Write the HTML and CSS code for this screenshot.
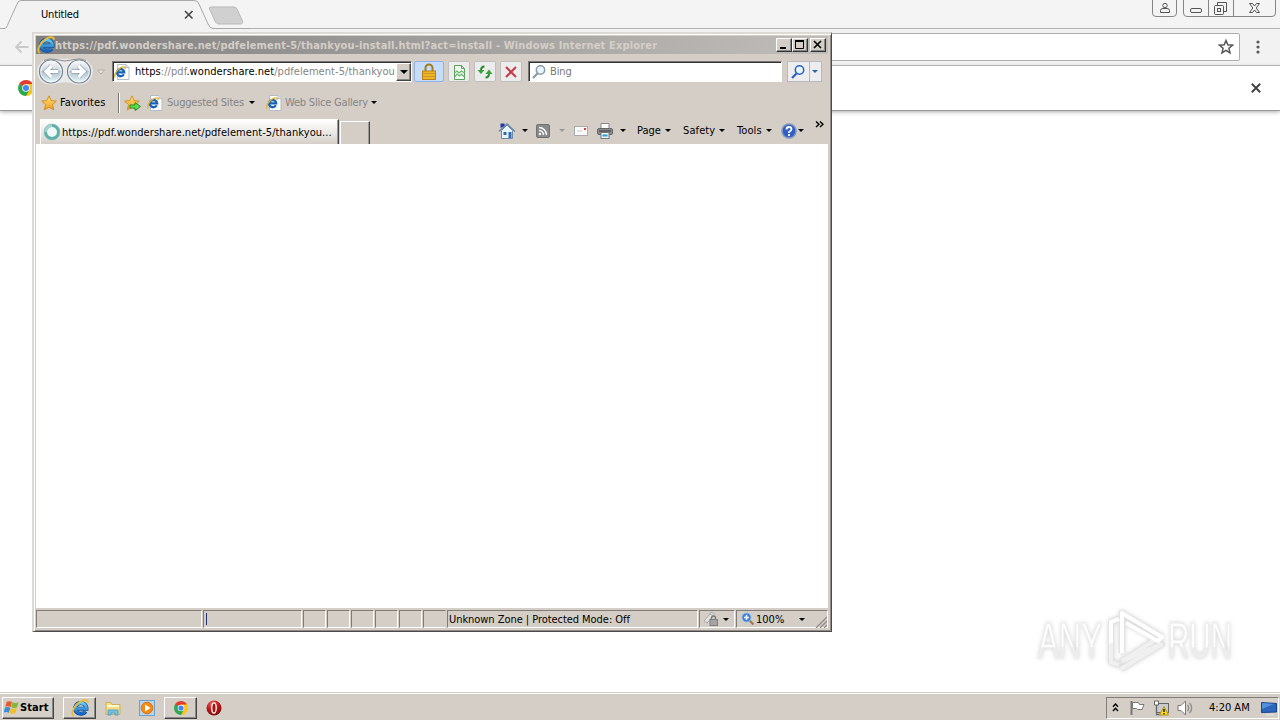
FILE: index.html
```html
<!DOCTYPE html>
<html lang="en">
<head>
<meta charset="utf-8">
<title>Desktop</title>
<link rel="stylesheet" href="styles.css">
</head>
<body>
<svg class="defs" aria-hidden="true">
  <defs>
    <linearGradient id="blue" x1="0" y1="0" x2="0" y2="1"><stop offset="0" stop-color="#62cdf8"/><stop offset="1" stop-color="#1763c0"/></linearGradient>
    <linearGradient id="gold" x1="0" y1="0" x2="0" y2="1"><stop offset="0" stop-color="#ffe680"/><stop offset="1" stop-color="#f09a12"/></linearGradient>
    <linearGradient id="glass" x1="0" y1="0" x2="0" y2="1"><stop offset="0" stop-color="#fdfdfe"/><stop offset=".48" stop-color="#ccd5dc"/><stop offset=".5" stop-color="#b3c1cc"/><stop offset="1" stop-color="#e6fbff"/></linearGradient>
    <linearGradient id="mark" x1="0" y1="0" x2="0" y2="1"><stop offset="0" stop-color="#ffffff"/><stop offset=".6" stop-color="#fdfdfd"/><stop offset=".62" stop-color="#ededed"/><stop offset="1" stop-color="#eeeeee"/></linearGradient>
    <radialGradient id="red" cx=".4" cy=".25" r=".8"><stop offset="0" stop-color="#f06a60"/><stop offset=".5" stop-color="#c01818"/><stop offset="1" stop-color="#700808"/></radialGradient>
  </defs>
  <symbol id="ie" viewBox="0 0 16 16">
    <path d="M12.900 11A5 4.800 0 1 1 13.700 8.600H5" fill="none" stroke="#0b4590" stroke-width="3.600"/>
    <path d="M12.900 11A5 4.800 0 1 1 13.700 8.600H5" fill="none" stroke="url(#blue)" stroke-width="2.600"/>
    <path d="M2.500 15C-.8 13.500 2.500 6 7.500 2.800C11.500 .3 15.500 .2 15 3.500" fill="none" stroke="#edbb30" stroke-width="1.600"/>
  </symbol>
  <symbol id="page" viewBox="0 0 16 16">
    <path d="M3.500 .5h8.500l3 3v12h-11.500z" fill="#fff" stroke="#b4bcc6"/><path d="M12 .5v3h3" fill="#dfe6ee" stroke="#b4bcc6"/>
    <path d="M9.800 10.300A3.600 3.600 0 1 1 10.200 8.400H4" fill="none" stroke="#1762b6" stroke-width="2.300"/>
    <path d="M1.200 13.500C-.5 11 3 5.500 6.500 3.800C9.500 2.200 12 2.600 11 5" fill="none" stroke="#e2b22f" stroke-width="1.400"/>
  </symbol>
  <symbol id="star" viewBox="0 0 16 16"><path d="M8 .8l2.200 4.800 5.200.5-3.900 3.500 1.200 5.300L8 12.200 3.300 14.900l1.200-5.300L.6 6.100l5.200-.5z" fill="url(#gold)" stroke="#d08a1c" stroke-width=".9"/></symbol>
  <symbol id="chrome" viewBox="0 0 16 16">
    <path d="M8 8L1.100 4A8 8 0 0 1 14.900 4z" fill="#e33b2e"/><path d="M8 8L14.900 4A8 8 0 0 1 8 16z" fill="#fbc616"/><path d="M8 8v8A8 8 0 0 1 1.100 4z" fill="#2da94f"/>
    <path d="M8 4h6.900L11.500 10 8 16z" fill="#fbc616"/><path d="M1.100 4l3.500 6L8 16l3.400-6z" fill="#2da94f"/><circle cx="8" cy="8" r="3.800" fill="#fff"/><circle cx="8" cy="8" r="3" fill="#4285f4"/>
  </symbol>
  <symbol id="lens" viewBox="0 0 16 16"><path d="M6.500 9.500L2 14" stroke="currentColor" stroke-width="2.200"/><circle cx="9.500" cy="6" r="4.200" fill="#e8f5fc" stroke="currentColor" stroke-width="1.500"/></symbol>
</svg>

<main class="desktop">
  <section class="chrome">
    <header class="chrome-tabs">
      <svg class="tab-shape" viewBox="0 0 250 30"><path d="M0 28.500H4C7 28.500 7 26 8 24L17 4Q18 .5 21 .5H194Q198 .5 199 4L208 24Q210 28.500 213 28.500H250V30H0z" fill="#f2f2f2"/><path d="M0 28.500H4C7 28.500 7 26 8 24L17 4Q18 .5 21 .5H194Q198 .5 199 4L208 24Q210 28.500 213 28.500H250" fill="none" stroke="#a9a9a9"/><path d="M211 7H234Q236 7 237 9L242.500 21Q243.500 24 240 24H219Q216.500 24 215.500 22L209.500 9Q208.500 7 211 7z" fill="#d0d0d0" stroke="#b9b9b9"/><path d="M185 11l7.500 7.500M192.500 11l-7.500 7.500" stroke="#444" stroke-width="1.600"/></svg>
      <span class="chrome-title t">Untitled</span>
      <svg class="winbtns" viewBox="0 0 130 18" fill="none" stroke="#858585"><path d="M2.500 0V13Q2.500 16.500 6 16.500H23Q26.500 16.500 26.500 13V0M33.500 0V13Q33.500 16.500 37 16.500H122Q125.500 16.500 125.500 13V0M58.500 0V16M83.500 0V16"/><g stroke="#555"><circle cx="15" cy="5.500" r="2.200"/><path d="M10.500 12.500V10.500Q10.500 8.500 13 8.500H17Q19.500 8.500 19.500 10.500V12.500z"/><rect x="40.500" y="8.500" width="11" height="4" rx="1.500"/><path d="M67.500 5V2.500H76.500V11.500H74"/><rect x="64.500" y="5.500" width="9" height="9" rx="1"/><rect x="67.500" y="8.500" width="3" height="3"/><path d="M99.500 3.500h3l2 2.500 2-2.500h3l-3.300 4.500 3.300 4.500h-3l-2-2.500-2 2.500h-3l3.300-4.500z"/></g></svg>
    </header>
    <div class="chrome-bar">
      <svg class="back" viewBox="0 0 16 14"><path d="M14.500 7H2M7.500 1.500L2 7l5.500 5.500" fill="none" stroke="#cacaca" stroke-width="1.800"/></svg>
      <div class="omnibox"><svg viewBox="0 0 16 16"><path d="M8 1.500l1.800 4.300 4.700.4-3.600 3.100 1.100 4.600-4-2.500-4 2.500 1.100-4.600L1.500 6.200l4.700-.4z" fill="none" stroke="#555" stroke-width="1.500"/></svg></div>
      <svg class="dots" viewBox="0 0 4 14" fill="#5a5a5a"><circle cx="2" cy="2" r="1.600"/><circle cx="2" cy="7" r="1.600"/><circle cx="2" cy="12" r="1.600"/></svg>
    </div>
    <div class="infobar"><svg class="i16"><use href="#chrome"/></svg><svg class="close" viewBox="0 0 10 10"><path d="M.8.8l8.400 8.400M9.200.8L.8 9.200" stroke="#444" stroke-width="2"/></svg></div>
  </section>

  <svg class="watermark" viewBox="0 0 210 76">
    <g fill="url(#mark)" stroke="#ececec" stroke-width=".8" font-family="Liberation Sans Narrow, Liberation Sans, sans-serif" font-size="50"><text x="8" y="55" textLength="64" lengthAdjust="spacingAndGlyphs">ANY</text><text x="138" y="55" textLength="64" lengthAdjust="spacingAndGlyphs">RUN</text></g>
    <g fill="none" stroke="#e4e4e4" stroke-width="6" stroke-linejoin="round"><path d="M89 16L81 19V59L89 62M92 50V10L132 34M91 66L132 41L92 58L125 37"/></g>
    <path d="M89 16L81 19V59L89 62M91 66L132 41L92 58L125 37" fill="none" stroke="#f0f0f0" stroke-width="4"/>
    <path d="M81 40V19L89 16M92 50V10L132 34L128 38L96 20" fill="none" stroke="#fff" stroke-width="4" stroke-linejoin="round"/>
  </svg>

  <section class="ie">
    <header class="titlebar">
      <svg class="i18"><use href="#ie"/></svg><b class="t title-text">https://pdf.wondershare.net/pdfelement-5/thankyou-install.html?act=install - Windows Internet Explorer</b>
      <div class="controls"><span class="cap"><svg viewBox="0 0 12 10"><path d="M2 8h6" stroke="#000" stroke-width="2"/></svg></span><span class="cap"><svg viewBox="0 0 12 10"><path d="M1.500 1v7.500h8V1M1 1h9" fill="none" stroke="#000"/><path d="M1 1h9" stroke="#000" stroke-width="2"/></svg></span><span class="cap last"><svg viewBox="0 0 12 10"><path d="M2 1l7 7M9 1L2 8" stroke="#000" stroke-width="1.600"/></svg></span></div>
    </header>

    <div class="nav">
      <svg class="travel" viewBox="0 0 68 28"><path d="M14 .8H44A12.800 12.800 0 0 1 44 26.500H40Q29 22 18 26.500H14A12.800 12.800 0 0 1 14 .8z" fill="#e9e9ea"/><path d="M8 2.500Q14 -.2 20 1.500Q29 4.500 38 1.500Q44 -.2 50 2.500" fill="none" stroke="#8e8c8a"/><g fill="url(#glass)" stroke="#74828f" stroke-width="1.200"><circle cx="15" cy="13.500" r="11.500"/><circle cx="43" cy="13.500" r="11.500"/></g><g fill="none" stroke="#f2f8fb" stroke-width="1"><circle cx="15" cy="13.500" r="10.300"/><circle cx="43" cy="13.500" r="10.300"/></g><g fill="none" stroke="#91a5b4" stroke-width="4.600"><path d="M22 13.500H11M15.500 8L10 13.500L15.500 19M36 13.500H47M42.500 8L48 13.500L42.500 19"/></g><g fill="none" stroke="#fff" stroke-width="3.200"><path d="M22 13.500H11M15.500 8L10 13.500L15.500 19M36 13.500H47M42.500 8L48 13.500L42.500 19"/></g><path d="M61.500 12h7l-3.500 4z" fill="#e6e2dc" stroke="#aaa49b" stroke-width=".8"/></svg>
      <div class="address"><svg class="i16"><use href="#page"/></svg><span class="t url"><i>https</i>://pdf<i>.wondershare.net</i>/pdfelement-5/thankyou-</span><span class="drop"><i class="caret big"></i></span></div>
      <span class="tool lock"><svg viewBox="0 0 16 18"><path d="M4.500 9V5a3.500 3.500 0 0 1 7 0v4" fill="none" stroke="#a77a18" stroke-width="2"/><rect x="1.500" y="8" width="13" height="8.500" fill="#efb52a" stroke="#b88216"/><path d="M2 10.500h12M2 13.500h12" stroke="#ce9520"/></svg></span>
      <span class="tool"><svg viewBox="0 0 16 18"><path d="M3.500 2.500h7l3 3v11h-10z" fill="#f3fbf3" stroke="#58a15a"/><path d="M10.500 2.500v3h3" fill="none" stroke="#58a15a"/><path d="M3.500 10l2.500-2 2 2 2.500-2 3 2M3.500 14l2.500-3 2.500 2 2-2 3 3" fill="none" stroke="#6db371" stroke-width="1.200"/></svg></span>
      <span class="tool"><svg viewBox="0 0 16 18"><path d="M7.500 3.500Q4 3.500 4 7.500" fill="none" stroke="#268b31" stroke-width="2"/><path d="M.5 7h7L4 11z" fill="#36a33c"/><path d="M8.500 14.500Q12 14.500 12 10.500" fill="none" stroke="#268b31" stroke-width="2"/><path d="M8.500 11h7L12 6.500z" fill="#36a33c"/></svg></span>
      <span class="tool"><svg viewBox="0 0 16 18"><path d="M3 4l10 10M13 4L3 14" stroke="#c53a44" stroke-width="2"/></svg></span>
      <div class="search"><svg class="i16"><use href="#lens"/></svg><span class="t bing">Bing</span></div>
      <span class="go"><svg class="i16"><use href="#lens"/></svg><i class="caret"></i></span>
    </div>

    <div class="favs">
      <svg class="i16"><use href="#star"/></svg><span class="t f1">Favorites</span><i class="rule"></i>
      <svg class="addstar" viewBox="0 0 18 16"><use href="#star" width="16" height="16"/><path d="M6 10h5V7.500l5.500 4-5.500 4V13H6z" fill="#5fdc50" stroke="#219126"/></svg>
      <svg class="i16 f2"><use href="#page"/></svg><span class="t muted f3">Suggested Sites</span><i class="caret f4"></i>
      <svg class="i16 f5"><use href="#page"/></svg><span class="t muted f6">Web Slice Gallery</span><i class="caret f7"></i>
    </div>

    <div class="tabs">
      <div class="tab"><svg class="i18" viewBox="0 0 18 18"><circle cx="9" cy="9" r="6.500" fill="#eef8f6" stroke="#5cb0ab" stroke-width="3"/><path d="M9 2.500A6.500 6.500 0 0 0 2.500 9" fill="none" stroke="#a3d3ce" stroke-width="3"/><circle cx="9" cy="9" r="8" fill="none" stroke="#8fb9b8" stroke-width=".6"/></svg><span class="t tab-text">https://pdf.wondershare.net/pdfelement-5/thankyou...</span></div>
      <div class="newtab"></div>
      <div class="commands">
        <svg class="home" viewBox="0 0 18 18"><path d="M3.500 8.500V16.500H14.500V8.500L9 3z" fill="#eaf4fc" stroke="#6b8ba8"/><path d="M1 9.500L9 2l8 7.500" fill="none" stroke="#668aa9" stroke-width="1.500"/><path d="M2.500 6V1.500h4V4z" fill="#2637a8"/><path d="M5.500 10h3v3h-3zM10.500 10h3v6h-3z" fill="#2f6cad"/></svg><i class="caret c1"></i>
        <svg class="rss" viewBox="0 0 14 14"><rect x=".5" y=".5" width="13" height="13" rx="1.500" fill="#898989" stroke="#717171"/><circle cx="4" cy="10" r="1.200" fill="#fff"/><path d="M3 6.500A4.500 4.500 0 0 1 7.500 11M3 3.500A7.500 7.500 0 0 1 10.500 11" fill="none" stroke="#fff" stroke-width="1.400"/></svg><i class="caret grey c2"></i>
        <svg class="mail" viewBox="0 0 14 12"><rect x=".5" y="1.500" width="13" height="9" fill="#fafafa" stroke="#aaa"/><path d="M10 3h2v2h-2z" fill="#e33"/><path d="M3 6h5" stroke="#ccc"/></svg>
        <svg class="printer" viewBox="0 0 16 16"><path d="M4 6V.5h8V6" fill="#fff" stroke="#888"/><rect x=".5" y="5.500" width="15" height="6" rx="1.500" fill="#8c8c8c" stroke="#666"/><path d="M2 8h12" stroke="#333"/><rect x="4" y="9.500" width="8" height="6" fill="#e9f6fb" stroke="#777"/><path d="M5.500 12.500h5" stroke="#2b9cc8" stroke-width="2"/></svg><i class="caret c3"></i>
        <span class="t pg">Page</span><i class="caret c4"></i><span class="t sf">Safety</span><i class="caret c5"></i><span class="t tl">Tools</span><i class="caret c6"></i>
        <svg class="help" viewBox="0 0 16 16"><circle cx="8" cy="8" r="7" fill="#315fc4" stroke="#8096bd" stroke-width="1.500"/><path d="M5.500 6.500Q5.500 4 8 4T10.500 6.200Q10.500 7.500 8 9v1M8 11v2" fill="none" stroke="#fff" stroke-width="1.800"/></svg><i class="caret c7"></i>
        <svg class="more" viewBox="0 0 9 7"><path d="M1 .5l3 2.800-3 2.800M5 .5l3 2.800-3 2.800" fill="none" stroke="#000" stroke-width="1.400"/></svg>
      </div>
    </div>

    <div class="content"></div>

    <footer class="status">
      <span class="pane s1"></span><span class="pane s2"><i></i></span><span class="pane s3"></span><span class="pane s3"></span><span class="pane s3"></span><span class="pane s3"></span><span class="pane s3"></span><span class="pane s3 open"></span>
      <span class="pane s4"><span class="t zone">Unknown Zone | Protected Mode: Off</span></span>
      <span class="pane s5"><svg viewBox="0 0 16 16"><path d="M1 10L7 3l3 2-6 7zM7 3l1-2 4 2" fill="#e4e4e4" stroke="#aaa"/><path d="M8.500 9V7a2 2 0 0 1 4 0v2" fill="none" stroke="#777" stroke-width="1.300"/><rect x="7" y="8.500" width="7.500" height="6" fill="#a5a5a5" stroke="#808080"/></svg><i class="caret"></i></span>
      <span class="pane s6"><svg viewBox="0 0 14 14"><path d="M8.500 8.500l4 4" stroke="#99774f" stroke-width="2.200"/><circle cx="5.500" cy="5.500" r="4.500" fill="#3b82d6" stroke="#8cbcf0"/><path d="M3 5.500h5M5.500 3v5" stroke="#fff" stroke-width="1.400"/></svg><span class="t zoom">100%</span><i class="caret"></i><svg class="grip" viewBox="0 0 12 12"><path d="M1 12L12 1M5 12l7-7M9 12l3-3" stroke="#8f8a83" stroke-width="1.300"/></svg></span>
    </footer>
  </section>

  <nav class="taskbar">
    <span class="btn start"><svg viewBox="0 0 18 18"><path d="M4 3Q6.500 1.500 9.500 3L8 8.500Q5 7 2.500 8.200z" fill="#e9592b"/><path d="M10 3.500Q13 5 16.500 3.500L15 8.800Q12 10 8.700 8.800z" fill="#82b83c"/><path d="M2.200 9Q5 8 7.800 9.300L6.200 14.500Q3.500 13 .7 14.200z" fill="#3a8ddd"/><path d="M8.300 9.500Q11 11 14.700 9.500L13.200 14.800Q10 16 6.800 14.800z" fill="#f3bd28"/></svg><b class="t">Start</b></span>
    <span class="btn app"><svg class="i18"><use href="#ie"/></svg></span>
    <svg class="task folder" viewBox="0 0 16 16"><path d="M1 2.500h5l1 2h8v10H1z" fill="#f4dc82" stroke="#c8b35f"/><path d="M2 6h12" stroke="#fff7c6" stroke-width="2"/><path d="M3 15V10h10v5h-3v-2H6v2z" fill="#75bfe5" stroke="#5aa0c8"/></svg>
    <svg class="task media" viewBox="0 0 16 16"><rect x=".5" y=".5" width="15" height="15" fill="#b7d5f0" stroke="#6b9fd2"/><circle cx="8" cy="8" r="5.800" fill="#f28a13" stroke="#d87710"/><path d="M6 4.500L11.500 8L6 11.500z" fill="#fff"/></svg>
    <span class="btn app second"><svg class="i14"><use href="#chrome"/></svg></span>
    <svg class="task opera" viewBox="0 0 16 16"><circle cx="8" cy="8" r="7.500" fill="url(#red)"/><ellipse cx="8" cy="8" rx="2.200" ry="5.200" fill="#a01313" stroke="#fff" stroke-width="1.300"/></svg>
    <div class="tray">
      <svg class="chev" viewBox="0 0 7 9"><path d="M1 3.800L3.500 1 6 3.800M1 8l2.500-2.800L6 8" fill="none" stroke="#000" stroke-width="1.400"/></svg>
      <svg class="flag" viewBox="0 0 16 16"><path d="M2.500 1v14" stroke="#777" stroke-width="2"/><path d="M3.500 2.500h6l1 2h4.500L13 9.500H8.500l-1-1h-4z" fill="#fff" stroke="#777"/></svg>
      <svg class="net" viewBox="0 0 16 16"><rect x="3.500" y="3.500" width="12" height="9" fill="#c9cbd0" stroke="#666"/><path d="M1.500 1v4h4V1z" fill="#fff" stroke="#666"/><path d="M3.500 5v9.500H8" fill="none" stroke="#666" stroke-width="1.300"/><path d="M11 6.500l4.500 8.500h-9z" fill="#ffdf24" stroke="#b49216"/><path d="M11 9v3M11 13v1.200" stroke="#000" stroke-width="1.300"/></svg>
      <svg class="sound" viewBox="0 0 17 16"><path d="M1 5.500h3L8.500 1v14L4 10.500H1z" fill="#fff" stroke="#777"/><path d="M10.500 5q2.500 3 0 6M12.500 3q4.500 5 0 10" fill="none" stroke="#888" stroke-width="1.200"/></svg>
      <span class="t clock">4:20 AM</span>
      <svg class="show" viewBox="0 0 16 16"><path d="M.5 2.500L15.500 3.500V12L.5 12.500z" fill="#2c66bb" stroke="#17438a"/><path d="M1 3l12 1L1 9z" fill="#5590dc"/><path d="M5 14.500h8" stroke="#ddd" stroke-width="1.500"/></svg>
    </div>
  </nav>
</main>
</body>
</html>
```
FILE: styles.css
```css
* { box-sizing: border-box; }
body { margin: 0; font: 11px "DejaVu Sans Condensed", "DejaVu Sans", sans-serif; color: #000; }
svg { display: block; flex: none; }
i { font-style: normal; }
.defs { position: absolute; width: 0; height: 0; }
.t { flex: none; white-space: nowrap; line-height: 14px; letter-spacing: -.2px; }
.i14 { width: 14px; height: 14px; }
.i16 { width: 16px; height: 16px; }
.i18 { width: 18px; height: 18px; }
.desktop { position: relative; width: 1280px; height: 720px; overflow: hidden; background: #fff; display: flex; flex-direction: column; justify-content: space-between; }

.chrome-tabs { height: 29px; display: flex; background: #f4f4f4; border-bottom: 1px solid #b3b3b3; }
.tab-shape { width: 250px; height: 30px; margin-right: -209px; }
.chrome-title { margin-top: 8px; z-index: 1; letter-spacing: -.15px; }
.winbtns { width: 130px; height: 18px; margin-left: auto; }
.chrome-bar { height: 37px; background: #f2f2f2; border-bottom: 1px solid #b5b5b5; display: flex; align-items: center; padding: 0 20px 0 14px; }
.back { width: 16px; height: 14px; }
.omnibox { flex: 1; height: 28px; margin: 0 16px 0 100px; border: 1px solid #adadad; border-radius: 2px; background: #fff; display: flex; align-items: center; justify-content: flex-end; padding-right: 5px; }
.omnibox svg { width: 16px; height: 16px; }
.dots { width: 4px; height: 14px; }
.infobar { height: 45px; display: flex; align-items: center; justify-content: space-between; padding: 0 19px 0 18px; border-bottom: 1px solid #999; box-shadow: 0 1px 4px #aaa; }
.close { width: 10px; height: 10px; }

.watermark { position: absolute; left: 1030px; top: 603px; width: 210px; height: 76px; overflow: visible; filter: drop-shadow(0 0 2px #d2d2d2); }

.ie { position: absolute; left: 32px; top: 32px; width: 800px; height: 600px; padding: 2px; background: #d5cec7; border: 2px solid; border-color: #ddd9d3 #4c4a49 #4c4a49 #ddd9d3; border-width: 2px 1px 1px 2px; padding: 2px 3px 3px 2px; box-shadow: inset 1px 1px #fff, inset -1px -1px #918c87; display: flex; flex-direction: column; }
.titlebar { height: 18px; flex: none; display: flex; align-items: center; color: #d5cec7; background: linear-gradient(90deg, #808080, #c0bdb9); padding: 0 2px 0 1px; }
.title-text { letter-spacing: .155px; padding-top: 1px; }
.controls { display: flex; margin-left: auto; }
.cap { width: 16px; height: 14px; background: #d5cec7; border: 1px solid; border-color: #fff #333 #333 #fff; box-shadow: inset -1px -1px #888; padding: 1px; }
.cap svg { width: 12px; height: 10px; }
.cap.last { margin-left: 2px; }
.caret { flex: none; width: 0; height: 0; border: 3px solid transparent; border-top-color: #000; border-bottom: 0; }
.caret.big { border-width: 4px 4px 0; }
.caret.grey { border-top-color: #999; }

.nav { height: 35px; flex: none; display: flex; align-items: center; padding-left: 1px; }
.travel { width: 68px; height: 28px; margin: 0 8px 0 -1px; overflow: visible; }
.address { width: 300px; height: 21px; display: flex; align-items: center; background: #fff; border: 1px solid; border-color: #777 #fff #fff #777; box-shadow: inset 1px 1px #333; padding-left: 1px; }
.url { width: 260px; margin-left: 5px; overflow: hidden; color: #858585; letter-spacing: .06px; }
.url i { color: #000; }
.drop { width: 15px; height: 18px; margin-left: auto; background: #d5cec7; border: 1px solid; border-color: #fff #444 #444 #fff; box-shadow: inset -1px -1px #888; display: flex; align-items: center; justify-content: center; }
.tool { width: 22px; height: 21px; margin-left: 4px; border: 1px solid #c1bfbd; border-radius: 2px; background: #edecec; display: flex; align-items: center; justify-content: center; }
.tool svg { width: 16px; height: 18px; }
.lock { width: 30px; margin-left: 2px; background: #c6dcfb; border-color: #91b2e2; }
.search { width: 254px; height: 21px; margin-left: 6px; background: #fff; border: 1px solid; border-color: #777 #fff #fff #777; box-shadow: inset 1px 1px #333; display: flex; align-items: center; padding-left: 2px; color: #8999a5; }
.bing { margin-left: 3px; color: #777; letter-spacing: -.1px; }
.go { width: 35px; height: 21px; margin-left: 5px; border: 1px solid #b9b7c0; background: linear-gradient(90deg, #edecee 21px, #b9b7c0 21px, #b9b7c0 22px, #edecee 22px); display: flex; align-items: center; justify-content: space-between; padding: 0 3px 0 2px; color: #285fc5; }
.go .caret { border-top-color: #2a68ae; }

.favs { height: 28px; flex: none; display: flex; align-items: center; padding: 0 0 1px 5px; }
.muted { color: #858585; }
.f1 { width: 45px; margin-left: 3px; letter-spacing: .1px; }
.rule { width: 2px; height: 20px; margin-left: 13px; background: linear-gradient(90deg, #77736f 50%, #fff 50%); }
.addstar { width: 18px; height: 16px; margin-left: 4px; }
.f2 { margin-left: 5px; }
.f3 { width: 78px; margin-left: 4px; }
.f4 { margin-left: 4px; }
.f5 { margin-left: 11px; }
.f6 { width: 82px; margin-left: 3px; }
.f7 { margin-left: 4px; }

.tabs { height: 27px; flex: none; display: flex; padding-left: 4px; align-items: flex-end; }
.tab { width: 299px; height: 25px; display: flex; align-items: center; background: linear-gradient(#fff, #e9e7e3 55%, #d5cec7); border: 1px solid; border-color: #fff #444 transparent #fff; border-bottom: 0; box-shadow: inset -1px 0 #999; padding-left: 2px; }
.tab-text { margin-left: 1px; padding-top: 1px; letter-spacing: .065px; }
.newtab { width: 30px; height: 23px; margin-left: 1px; border: 1px solid; border-color: #fff #444 transparent #fff; border-bottom: 0; box-shadow: inset -1px 0 #999; }
.commands { height: 27px; flex: 1; display: flex; align-items: center; margin-left: 128px; }
.home { width: 18px; height: 18px; }
.c1 { margin-left: 6px; }
.rss { width: 14px; height: 14px; margin-left: 8px; }
.c2 { margin-left: 9px; }
.mail { width: 14px; height: 12px; margin-left: 9px; }
.printer { width: 16px; height: 16px; margin-left: 9px; }
.c3 { margin-left: 7px; }
.pg { width: 25px; margin-left: 11px; letter-spacing: 0; }
.c4 { margin-left: 3px; }
.sf { width: 33px; margin-left: 12px; letter-spacing: .1px; }
.c5 { margin-left: 3px; }
.tl { width: 26px; margin-left: 12px; letter-spacing: .1px; }
.c6 { margin-left: 3px; }
.help { width: 16px; height: 16px; margin-left: 9px; }
.c7 { margin-left: 1px; }
.more { width: 9px; height: 7px; margin: -13px 0 0 11px; }

.content { flex: 1; background: #fff; }
.status { height: 20px; flex: none; display: flex; padding-top: 2px; }
.pane { flex: none; height: 18px; margin-right: 1px; border: 1px solid; border-color: #807c78 #fff #fff #807c78; display: flex; align-items: center; }
.s1 { width: 166px; }
.s2 { width: 99px; padding-left: 2px; }
.s2 i { width: 1px; height: 12px; background: #22306f; }
.s3 { width: 23px; }
.open { border-right-color: transparent; }
.s4 { width: 251px; }
.zone { margin-left: 1px; padding-top: 1px; letter-spacing: -.05px; }
.s5 { width: 36px; padding-left: 3px; }
.s5 svg { width: 16px; height: 16px; margin-right: 4px; }
.s6 { width: 92px; margin-right: 0; padding-left: 4px; }
.s6 svg { width: 14px; height: 14px; }
.zoom { width: 43px; margin-left: 1px; padding-top: 1px; letter-spacing: 0; }
.s6 .grip { width: 12px; height: 12px; margin: 5px 0 0 auto; }

.taskbar { height: 28px; display: flex; align-items: center; background: #d5cec7; border-top: 1px solid #d5cec7; box-shadow: inset 0 1px #fff; padding: 2px 1px 0 2px; }
.btn { height: 22px; display: flex; align-items: center; justify-content: center; border: 1px solid; border-color: #fff #444 #444 #fff; box-shadow: inset -1px -1px #888; }
.start { width: 52px; justify-content: flex-start; }
.start svg { width: 17px; height: 17px; }
.start .t { letter-spacing: .1px; }
.app { width: 33px; margin-left: 9px; }
.task { width: 16px; height: 16px; }
.folder { margin-left: 9px; }
.media { margin-left: 18px; }
.second { margin-left: 9px; }
.opera { margin-left: 9px; }
.tray { width: 173px; height: 22px; margin-left: auto; border: 1px solid; border-color: #807c78 #fff #fff #807c78; display: flex; align-items: center; padding-left: 5px; }
.chev { width: 7px; height: 9px; }
.flag { width: 16px; height: 16px; margin-left: 10px; }
.net { width: 16px; height: 16px; margin-left: 8px; }
.sound { width: 17px; height: 16px; margin-left: 8px; }
.clock { width: 42px; margin-left: 15px; letter-spacing: 0; }
.show { width: 16px; height: 16px; margin-left: 10px; }
```
